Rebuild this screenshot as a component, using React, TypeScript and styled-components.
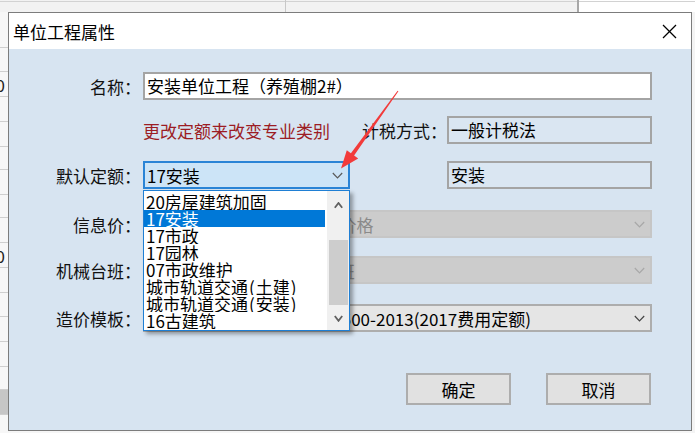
import React from "react";
import styled, { createGlobalStyle } from "styled-components";

const FONT = `"Noto Sans CJK SC", "Noto Sans", sans-serif`;

const Global = createGlobalStyle`
  html, body { margin: 0; padding: 0; background: #fff; }
  body { font-family: ${FONT}; }
`;

const Desktop = styled.div`
  position: relative;
  width: 695px;
  height: 433px;
  overflow: hidden;
  display: grid;
  grid-template-columns: 8px 684px 3px;
  grid-template-rows: 12px 421px;
  background: #f6f6f6;
  font-family: ${FONT};
`;

const TopStrip = styled.div`
  grid-column: 1 / 4;
  grid-row: 1;
  background:
    linear-gradient(#c8c8c8, #c8c8c8) 285px 0 / 1px 100% no-repeat,
    linear-gradient(#a8a8a8, #a8a8a8) 577px 0 / 2px 100% no-repeat,
    linear-gradient(#d2d2d2, #d2d2d2) 0 1px / 100% 1px no-repeat,
    linear-gradient(#ffffff, #ffffff) 579px 0 / 120px 100% no-repeat,
    #f2f2f2;
`;

const LeftStrip = styled.div`
  grid-column: 1;
  grid-row: 2;
  display: flex;
  flex-direction: column;
  overflow: hidden;
  background: #f7f7f7;
`;

const Cell = styled.div<{ $h: number; $shade?: boolean }>`
  box-sizing: border-box;
  height: ${(p) => p.$h}px;
  flex-shrink: 0;
  border-bottom: 1px solid #cfcfcf;
  background: ${(p) => (p.$shade ? "#c6c6c6" : "transparent")};
  display: flex;
  align-items: center;
  justify-content: flex-end;
  padding-right: 3px;
  font-size: 17px;
  color: #222;
  overflow: hidden;
  white-space: nowrap;
`;

const RightStrip = styled.div`
  grid-column: 3;
  grid-row: 2;
  background: #f4f4f4;
`;

const Dialog = styled.div`
  grid-column: 2;
  grid-row: 2;
  height: 419px;
  box-sizing: border-box;
  border: 1px solid #7c7c7c;
  display: flex;
  flex-direction: column;
  background: #d7e4f1;
`;

const TitleBar = styled.div`
  height: 36px;
  flex-shrink: 0;
  background: #ffffff;
  display: flex;
  align-items: center;
  justify-content: space-between;
  padding-left: 4px;
  font-size: 17px;
  color: #000;
`;

const CloseBtn = styled.div`
  width: 44px;
  height: 36px;
  display: flex;
  align-items: center;
  justify-content: center;
`;

const Body = styled.div`
  flex: 1;
  padding-top: 23px;
  display: flex;
  flex-direction: column;
`;

const Row = styled.div<{ $mt: number }>`
  display: flex;
  align-items: center;
  height: 28px;
  margin-top: ${(p) => p.$mt}px;
`;

const Label = styled.div`
  width: 132px;
  margin-right: 2px;
  flex-shrink: 0;
  text-align: right;
  font-size: 17px;
  color: #111;
  white-space: nowrap;
`;

const FieldArea = styled.div`
  width: 509px;
  height: 100%;
  display: flex;
  align-items: center;
`;

const TextBox = styled.div`
  box-sizing: border-box;
  width: 509px;
  height: 28px;
  border: 2px solid #a4a4a4;
  background: #fff;
  padding-left: 2px;
  font-size: 17px;
  line-height: 24px;
  color: #000;
  white-space: nowrap;
`;

const ReadBox = styled.div<{ $push?: boolean }>`
  box-sizing: border-box;
  width: 205px;
  height: 28px;
  margin-left: ${(p) => (p.$push ? "auto" : "0")};
  border: 2px solid #a4a4a4;
  background: #dae6f2;
  padding-left: 2px;
  font-size: 17px;
  line-height: 24px;
  color: #000;
  white-space: nowrap;
`;

const RedNote = styled.div`
  font-size: 17px;
  color: #9c1c24;
  white-space: nowrap;
`;

const SubLabel = styled.div`
  margin-left: auto;
  font-size: 17px;
  color: #111;
  white-space: nowrap;
`;

type ComboKind = "focus" | "disabled" | "normal";

const comboBg: Record<ComboKind, string> = {
  focus: "#cce4f7",
  disabled: "#cccccc",
  normal: "#e5e5e5",
};
const comboBorder: Record<ComboKind, string> = {
  focus: "#2a84d6",
  disabled: "#c6c6c6",
  normal: "#adadad",
};
const comboText: Record<ComboKind, string> = {
  focus: "#000",
  disabled: "#8a8a8a",
  normal: "#000",
};

const ComboWrap = styled.div<{ $w: number }>`
  position: relative;
  width: ${(p) => p.$w}px;
  height: 28px;
  flex-shrink: 0;
`;

const ComboBox = styled.div<{ $kind: ComboKind }>`
  box-sizing: border-box;
  width: 100%;
  height: 100%;
  border: 2px solid ${(p) => comboBorder[p.$kind]};
  background: ${(p) => comboBg[p.$kind]};
  color: ${(p) => comboText[p.$kind]};
  display: flex;
  align-items: center;
  padding-left: 2px;
  font-size: 17px;
  white-space: nowrap;
`;

const ComboText = styled.span`
  flex: 1;
  overflow: hidden;
`;

const ChevronSlot = styled.div`
  width: 22px;
  height: 100%;
  display: flex;
  align-items: center;
  justify-content: center;
  flex-shrink: 0;
`;

const DropList = styled.div`
  position: absolute;
  z-index: 5;
  left: 0;
  top: 29px;
  width: 207px;
  height: 141px;
  box-sizing: border-box;
  border: 1px solid #1f7fd4;
  background: #fff;
  display: flex;
  box-shadow: 3px 3px 4px rgba(0, 0, 0, 0.35);
`;

const Items = styled.div`
  flex: 1;
  padding-top: 2px;
  margin-right: 2px;
  overflow: hidden;
`;

const Item = styled.div<{ $sel?: boolean }>`
  height: 17px;
  line-height: 17px;
  padding-left: 2px;
  font-size: 17px;
  white-space: nowrap;
  overflow: hidden;
  background: ${(p) => (p.$sel ? "#0078d7" : "transparent")};
  color: ${(p) => (p.$sel ? "#fff" : "#000")};
`;

const Paren = styled.span`
  margin: 0 1px;
`;

const ScrollBar = styled.div`
  width: 22px;
  background: #f0f0f0;
  display: flex;
  flex-direction: column;
`;

const ScrollBtn = styled.div<{ $h: number }>`
  height: ${(p) => p.$h}px;
  display: flex;
  align-items: center;
  justify-content: center;
  flex-shrink: 0;
`;

const Track = styled.div`
  flex: 1;
  display: flex;
  flex-direction: column;
  align-items: center;
`;

const Thumb = styled.div`
  margin-top: 21px;
  width: 19px;
  height: 65px;
  background: #cdcdcd;
`;

const ButtonRow = styled.div`
  display: flex;
  justify-content: flex-end;
  gap: 35px;
  padding-right: 40px;
  margin-top: 41px;
`;

const Button = styled.div`
  box-sizing: border-box;
  width: 105px;
  height: 32px;
  border: 2px solid #adadad;
  background: #e1e1e1;
  display: flex;
  align-items: center;
  justify-content: center;
  font-size: 17px;
  color: #000;
`;

const Overlay = styled.svg`
  position: absolute;
  left: 0;
  top: 0;
  z-index: 20;
  pointer-events: none;
`;

const Chevron = ({ color, up = false, w = 11, sw = 1.2 }: { color: string; up?: boolean; w?: number; sw?: number }) => (
  <svg width={w} height={7} viewBox={`0 0 ${w} 7`}>
    <polyline
      points={up ? `0.8,5.8 ${w / 2},1 ${w - 0.8},5.8` : `0.8,1 ${w / 2},5.8 ${w - 0.8},1`}
      fill="none"
      stroke={color}
      strokeWidth={sw}
    />
  </svg>
);

const leftCells: { h: number; t?: string; shade?: boolean }[] = [
  { h: 36 }, { h: 24 }, { h: 25, t: "0" }, { h: 25 }, { h: 25 }, { h: 23 }, { h: 25 },
  { h: 23 }, { h: 25 }, { h: 25, t: "0" }, { h: 25 }, { h: 24 }, { h: 25 }, { h: 25 },
  { h: 23 }, { h: 25, shade: true }, { h: 25 },
];

const renderItem = (t: string) => {
  const m = t.match(/^(.*)\((.*)\)$/);
  if (!m) return t;
  return (
    <>
      {m[1]}
      <Paren>(</Paren>
      {m[2]}
      <Paren>)</Paren>
    </>
  );
};

const listItems = [
  "20房屋建筑加固",
  "17安装",
  "17市政",
  "17园林",
  "07市政维护",
  "城市轨道交通(土建)",
  "城市轨道交通(安装)",
  "16古建筑",
];

export default function App() {
  return (
    <>
      <Global />
      <Desktop>
        <TopStrip />
        <LeftStrip>
          {leftCells.map((c, i) => (
            <Cell key={i} $h={c.h} $shade={c.shade}>
              {c.t}
            </Cell>
          ))}
        </LeftStrip>
        <Dialog>
          <TitleBar>
            <span>单位工程属性</span>
            <CloseBtn>
              <svg width="15" height="15" viewBox="0 0 15 15">
                <line x1="1" y1="1" x2="14" y2="14" stroke="#000" strokeWidth="1.2" />
                <line x1="14" y1="1" x2="1" y2="14" stroke="#000" strokeWidth="1.2" />
              </svg>
            </CloseBtn>
          </TitleBar>
          <Body>
            <Row $mt={0}>
              <Label>名称：</Label>
              <TextBox>安装单位工程（养殖棚2#）</TextBox>
            </Row>
            <Row $mt={16}>
              <Label />
              <FieldArea>
                <RedNote>更改定额来改变专业类别</RedNote>
                <SubLabel>计税方式：</SubLabel>
                <ReadBox>一般计税法</ReadBox>
              </FieldArea>
            </Row>
            <Row $mt={17}>
              <Label>默认定额：</Label>
              <FieldArea>
                <ComboWrap $w={207}>
                  <ComboBox $kind="focus">
                    <ComboText>17安装</ComboText>
                    <ChevronSlot>
                      <Chevron color="#5a5a5a" />
                    </ChevronSlot>
                  </ComboBox>
                  <DropList>
                    <Items>
                      {listItems.map((t) => (
                        <Item key={t} $sel={t === "17安装"}>
                          {renderItem(t)}
                        </Item>
                      ))}
                    </Items>
                    <ScrollBar>
                      <ScrollBtn $h={28}>
                        <Chevron color="#606060" up w={9} sw={1.8} />
                      </ScrollBtn>
                      <Track>
                        <Thumb />
                      </Track>
                      <ScrollBtn $h={23}>
                        <Chevron color="#606060" w={9} sw={1.8} />
                      </ScrollBtn>
                    </ScrollBar>
                  </DropList>
                </ComboWrap>
                <ReadBox $push>安装</ReadBox>
              </FieldArea>
            </Row>
            <Row $mt={21}>
              <Label>信息价：</Label>
              <ComboWrap $w={509}>
                <ComboBox $kind="disabled">
                  <ComboText>郑州市2017年第10期信息价格</ComboText>
                  <ChevronSlot>
                    <Chevron color="#a8a8a8" />
                  </ChevronSlot>
                </ComboBox>
              </ComboWrap>
            </Row>
            <Row $mt={18}>
              <Label>机械台班：</Label>
              <ComboWrap $w={509}>
                <ComboBox $kind="disabled">
                  <ComboText>河南省2017年施工机械台班</ComboText>
                  <ChevronSlot>
                    <Chevron color="#a8a8a8" />
                  </ChevronSlot>
                </ComboBox>
              </ComboWrap>
            </Row>
            <Row $mt={20}>
              <Label>造价模板：</Label>
              <ComboWrap $w={509}>
                <ComboBox $kind="normal">
                  <ComboText>工程量清单计价规范GB50500-2013(2017费用定额)</ComboText>
                  <ChevronSlot>
                    <Chevron color="#444" />
                  </ChevronSlot>
                </ComboBox>
              </ComboWrap>
            </Row>
            <ButtonRow>
              <Button>确定</Button>
              <Button>取消</Button>
            </ButtonRow>
          </Body>
        </Dialog>
        <RightStrip />
        <Overlay width="695" height="433" viewBox="0 0 695 433">
          <polygon
            points="398.4,91.3 354.1,155.6 358.2,158.5 341,168.5 346.8,150.3 350.9,153.2 397.6,90.7"
            fill="#f23b3b"
          />
        </Overlay>
      </Desktop>
    </>
  );
}
